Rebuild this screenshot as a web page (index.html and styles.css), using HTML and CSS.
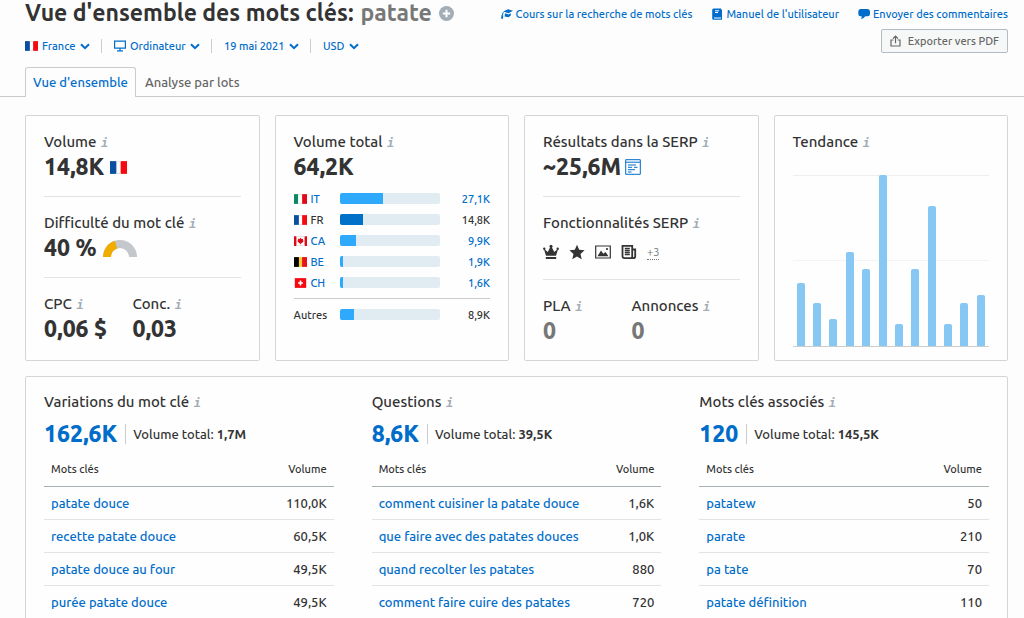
FILE: index.html
```html
<!DOCTYPE html>
<html lang="fr">
<head>
<meta charset="utf-8">
<meta name="viewport" content="width=device-width, initial-scale=1">
<title>Vue d'ensemble des mots clés: patate</title>
<link rel="stylesheet" href="styles.css">
</head>
<body>
<svg class="sprite" aria-hidden="true">
  <symbol id="chevron" viewBox="0 0 10 7"><path d="M1 1.2 5 5.2 9 1.2" fill="none" stroke="currentColor" stroke-width="2"/></symbol>
  <symbol id="flag-fr" viewBox="0 0 16 12"><path fill="#fff" d="M0 0h16v12H0z"/><path fill="#0a4ea2" d="M0 0h6v12H0z"/><path fill="#f50a12" d="M10 0h6v12h-6z"/><path d="M6 .5h4M6 11.5h4" stroke="#ddd"/></symbol>
  <symbol id="flag-it" viewBox="0 0 16 12"><path fill="#fff" d="M0 0h16v12H0z"/><path fill="#0b8a62" d="M0 0h5v12H0z"/><path fill="#e00a17" d="M10 0h6v12h-6z"/><path d="M5 .5h5M5 11.5h5" stroke="#ddd"/></symbol>
  <symbol id="flag-ca" viewBox="0 0 16 12"><path fill="#fff" d="M0 0h16v12H0z"/><path fill="#e00a17" d="M0 0h3v12H0zM13 0h3v12h-3zM8 2l1.200 1.500L11 3.200v2l1 .8-2.500 2.800h-1V10h-1V8.800h-1L4 6l1-.8v-2l1.800.3z"/><path d="M3 .5h10M3 11.5h10" stroke="#ddd"/></symbol>
  <symbol id="flag-be" viewBox="0 0 16 12"><path fill="#f5cf3a" d="M0 0h16v12H0z"/><path d="M0 0h6v12H0z"/><path fill="#e8111b" d="M10 0h6v12h-6z"/></symbol>
  <symbol id="flag-ch" viewBox="0 0 16 12"><path fill="#f50a12" d="M1 0h14v12H1z"/><path fill="#fff" d="M7 3h2v2h2v2H9v2H7V7H5V5h2z"/></symbol>
</svg>

<header class="head">
  <div class="head-row">
    <h1 class="title">Vue d'ensemble des mots clés: <span class="keyword">patate</span>
      <button class="icon-button" type="button" aria-label="Ajouter"><svg class="plus" viewBox="0 0 15 15"><circle cx="7.500" cy="7.500" r="7.500" fill="#a3adb5"/><path d="M7.500 3.800v7.400M3.800 7.500h7.400" stroke="#fff" stroke-width="2"/></svg></button>
    </h1>
    <nav class="help">
      <a class="help-link" href="#"><svg class="help-icon" viewBox="0 0 12 12"><path d="M2.200 3.600 7 1.300 12 2.700 7.500 5.300z" fill="currentColor"/><path d="M4 5.200 3.600 8.500 7.500 9.300 9.800 7.600V5.300L7.500 6.400z" fill="currentColor"/><path d="M2.300 4.200 1.200 7.500" stroke="currentColor"/><path d="M.6 7.300h1.700L2 10.800H0z" fill="currentColor"/></svg>Cours sur la recherche de mots clés</a>
      <a class="help-link" href="#"><svg class="help-icon" viewBox="0 0 12 12"><path d="M2.500.5H10v9H3v1h7V1.500h1v10.300H2.600C1.600 11.800 1.200 11 1.200 10V2Q1.200.5 2.500.5z" fill="currentColor"/><path d="M4 2.800h4M4 4.500h3" stroke="#fff"/></svg>Manuel de l'utilisateur</a>
      <a class="help-link" href="#"><svg class="help-icon" viewBox="0 0 12 12"><path d="M2.500 1h7.200Q12 1 12 3.500v2.300Q12 8.300 9.700 8.300H7.400Q6 10.500 3 11.300 3.800 10 3.700 8.300H2.500Q.3 8.300.3 5.800V3.500Q.3 1 2.500 1z" fill="currentColor"/></svg>Envoyer des commentaires</a>
    </nav>
  </div>
  <div class="head-row">
    <form class="filters">
      <label class="filter"><svg class="flag" aria-hidden="true"><use href="#flag-fr"/></svg><select class="select" aria-label="Pays"><option>France</option></select><svg class="chevron"><use href="#chevron"/></svg></label>
      <label class="filter"><svg class="monitor" viewBox="0 0 12 12"><path d="M.6 1.200h10.800v7H.6zM6 8v2.500M3 10.900h6" fill="none" stroke="currentColor" stroke-width="1.200"/></svg><select class="select" aria-label="Appareil"><option>Ordinateur</option></select><svg class="chevron"><use href="#chevron"/></svg></label>
      <label class="filter"><select class="select" aria-label="Date"><option>19 mai 2021</option></select><svg class="chevron"><use href="#chevron"/></svg></label>
      <label class="filter"><select class="select" aria-label="Devise"><option>USD</option></select><svg class="chevron"><use href="#chevron"/></svg></label>
    </form>
    <button class="export" type="button"><svg class="export-icon" viewBox="0 0 11 12"><path d="M3.300 5H1v6h9V5H7.700M5.500 8.300V1.500M3 3.700 5.500 1.200 8 3.700" fill="none" stroke="currentColor" stroke-width="1.200"/></svg>Exporter vers PDF</button>
  </div>
  <nav class="tabs">
    <a class="tab tab-active" href="#" aria-current="page">Vue d'ensemble</a>
    <a class="tab" href="#">Analyse par lots</a>
  </nav>
</header>

<main class="content">
  <div class="cards">
    <section class="card">
      <div class="block">
        <h2 class="label">Volume <i class="info">i</i></h2>
        <div class="value">14,8K <svg class="flag flag-big"><use href="#flag-fr"/></svg></div>
      </div>
      <div class="block">
        <h2 class="label">Difficulté du mot clé <i class="info">i</i></h2>
        <div class="value">40 % <svg class="gauge" viewBox="0 0 34 17"><path d="M4 17A13 13 0 0 1 30 17" fill="none" stroke="#c4c7cc" stroke-width="8"/><path d="M4 17A13 13 0 0 1 13 4.600" fill="none" stroke="#f0ad00" stroke-width="8"/></svg></div>
      </div>
      <div class="block pair">
        <div class="pair-item"><h2 class="label">CPC <i class="info">i</i></h2><div class="value">0,06 $</div></div>
        <div class="pair-item"><h2 class="label">Conc. <i class="info">i</i></h2><div class="value">0,03</div></div>
      </div>
    </section>

    <section class="card">
      <div class="block">
        <h2 class="label">Volume total <i class="info">i</i></h2>
        <div class="value">64,2K</div>
        <ul class="countries">
          <li class="country"><a class="code" href="#"><svg class="flag"><use href="#flag-it"/></svg>IT</a><span class="track"><span class="fill" style="width:43%"></span></span><a class="amount" href="#">27,1K</a></li>
          <li class="country"><span class="code"><svg class="flag"><use href="#flag-fr"/></svg>FR</span><span class="track"><span class="fill fill-current" style="width:23%"></span></span><span class="amount">14,8K</span></li>
          <li class="country"><a class="code" href="#"><svg class="flag"><use href="#flag-ca"/></svg>CA</a><span class="track"><span class="fill" style="width:16%"></span></span><a class="amount" href="#">9,9K</a></li>
          <li class="country"><a class="code" href="#"><svg class="flag"><use href="#flag-be"/></svg>BE</a><span class="track"><span class="fill" style="width:3%"></span></span><a class="amount" href="#">1,9K</a></li>
          <li class="country"><a class="code" href="#"><svg class="flag"><use href="#flag-ch"/></svg>CH</a><span class="track"><span class="fill" style="width:3%"></span></span><a class="amount" href="#">1,6K</a></li>
          <li class="country others"><span class="code">Autres</span><span class="track"><span class="fill" style="width:14%"></span></span><span class="amount">8,9K</span></li>
        </ul>
      </div>
    </section>

    <section class="card">
      <div class="block">
        <h2 class="label">Résultats dans la SERP <i class="info">i</i></h2>
        <div class="value value-serp">~25,6M <a class="serp-link" href="#" aria-label="Voir la SERP"><svg class="serp-icon" viewBox="0 0 16 16"><path d="M.7.700h14.600v14.600H.7zM.7 3.200h14.600M3 6h8M3 8.300h4M9 8.300h3.500M3 10.700h7M3 13h3.500" fill="none" stroke="currentColor"/></svg></a></div>
      </div>
      <div class="block">
        <h2 class="label">Fonctionnalités SERP <i class="info">i</i></h2>
        <div class="features">
          <svg class="feature" viewBox="0 0 16 16"><path d="M.8 4.800 4.800 8 7.300 3h1.400l2.500 5 4-3.200L13 11.800H3zM2.800 13h10.400v2H2.800z" fill="currentColor"/><circle cx="8" cy="2.300" r="1.500" fill="currentColor"/><circle cx="1.300" cy="4.800" r="1.200" fill="currentColor"/><circle cx="14.700" cy="4.800" r="1.200" fill="currentColor"/></svg>
          <svg class="feature" viewBox="0 0 16 16"><path d="m8 .8 2.200 5 5.400.500-4.100 3.600 1.200 5.300L8 12.400l-4.700 2.800 1.200-5.300L.4 6.300l5.400-.500z" fill="currentColor"/></svg>
          <svg class="feature" viewBox="0 0 16 16"><path d="M.7 2h14.600v12H.7z" fill="none" stroke="currentColor" stroke-width="1.200"/><path d="M2.500 12.200 6 6.500l2.300 3.200L10.500 8l3 4.200z" fill="currentColor"/><circle cx="12" cy="5" r="1.100" fill="currentColor"/></svg>
          <svg class="feature" viewBox="0 0 16 16"><path d="M1.500 1.800h9.700v12.400H3.500q-2 0-2-2zM11.200 5.500h3v6.700q0 2-2 2H10" fill="none" stroke="currentColor" stroke-width="1.800"/><path d="M3.800 4.500h5M3.800 6.500h5M3.800 8.500h5M3.800 10.500h5" stroke="currentColor" stroke-width="1.300"/></svg>
          <a class="more" href="#">+3</a>
        </div>
      </div>
      <div class="block pair">
        <div class="pair-item"><h2 class="label">PLA <i class="info">i</i></h2><div class="value value-muted">0</div></div>
        <div class="pair-item"><h2 class="label">Annonces <i class="info">i</i></h2><div class="value value-muted">0</div></div>
      </div>
    </section>

    <section class="card card-trend">
      <h2 class="label">Tendance <i class="info">i</i></h2>
      <div class="chart">
        <span class="bar" style="height:37%"></span><span class="bar" style="height:25%"></span><span class="bar" style="height:16%"></span><span class="bar" style="height:55%"></span><span class="bar" style="height:45%"></span><span class="bar" style="height:100%"></span><span class="bar" style="height:13%"></span><span class="bar" style="height:45%"></span><span class="bar" style="height:82%"></span><span class="bar" style="height:13%"></span><span class="bar" style="height:25%"></span><span class="bar" style="height:30%"></span>
      </div>
    </section>
  </div>

  <div class="card ideas">
    <section class="idea">
      <h2 class="label">Variations du mot clé <i class="info">i</i></h2>
      <div class="summary"><a class="count" href="#">162,6K</a><span class="total">Volume total: <b>1,7M</b></span></div>
      <table class="table">
        <thead><tr><th>Mots clés</th><th>Volume</th></tr></thead>
        <tbody>
          <tr><td><a href="#">patate douce</a></td><td>110,0K</td></tr>
          <tr><td><a href="#">recette patate douce</a></td><td>60,5K</td></tr>
          <tr><td><a href="#">patate douce au four</a></td><td>49,5K</td></tr>
          <tr><td><a href="#">purée patate douce</a></td><td>49,5K</td></tr>
        </tbody>
      </table>
    </section>
    <section class="idea">
      <h2 class="label">Questions <i class="info">i</i></h2>
      <div class="summary"><a class="count" href="#">8,6K</a><span class="total">Volume total: <b>39,5K</b></span></div>
      <table class="table">
        <thead><tr><th>Mots clés</th><th>Volume</th></tr></thead>
        <tbody>
          <tr><td><a href="#">comment cuisiner la patate douce</a></td><td>1,6K</td></tr>
          <tr><td><a href="#">que faire avec des patates douces</a></td><td>1,0K</td></tr>
          <tr><td><a href="#">quand recolter les patates</a></td><td>880</td></tr>
          <tr><td><a href="#">comment faire cuire des patates</a></td><td>720</td></tr>
        </tbody>
      </table>
    </section>
    <section class="idea">
      <h2 class="label">Mots clés associés <i class="info">i</i></h2>
      <div class="summary"><a class="count" href="#">120</a><span class="total">Volume total: <b>145,5K</b></span></div>
      <table class="table">
        <thead><tr><th>Mots clés</th><th>Volume</th></tr></thead>
        <tbody>
          <tr><td><a href="#">patatew</a></td><td>50</td></tr>
          <tr><td><a href="#">parate</a></td><td>210</td></tr>
          <tr><td><a href="#">pa tate</a></td><td>70</td></tr>
          <tr><td><a href="#">patate définition</a></td><td>110</td></tr>
        </tbody>
      </table>
    </section>
  </div>
</main>
</body>
</html>
```

FILE: styles.css
```css
* { box-sizing: border-box; }

body {
  margin: 0;
  background: #fdfdfd;
  color: #333;
  font: 500 11px/20px Ubuntu, "Noto Sans", sans-serif;
}

a { color: #006dca; text-decoration: none; }
h1, h2, ul { margin: 0; padding: 0; }
svg { flex: none; }

.sprite { position: absolute; width: 0; height: 0; }

/* Header */
.head { border-bottom: 1px solid #c9ccce; }

.head-row {
  display: flex;
  justify-content: space-between;
  padding: 0 16px 0 25px;
}

.title {
  display: flex;
  align-items: center;
  gap: 7px;
  height: 26px;
  font-size: 23px;
  font-weight: 700;
  white-space: nowrap;
}

.keyword { color: #777; }

.icon-button { display: flex; padding: 0; border: 0; background: none; }
.plus { width: 15px; height: 15px; }

.help { display: flex; gap: 19px; padding-top: 2px; }
.help-link { display: flex; align-items: center; gap: 3px; white-space: nowrap; }
.help-icon { width: 12px; height: 12px; }

.filters { display: flex; align-items: center; padding-top: 13px; }

.filter {
  display: flex;
  align-items: center;
  gap: 4px;
  height: 14px;
  color: #006dca;
}

.filter + .filter {
  margin-left: 11px;
  padding-left: 12px;
  border-left: 1px solid #ccc;
}

.select {
  appearance: none;
  padding: 0;
  border: 0;
  background: none;
  color: inherit;
  font: inherit;
}

.flag { width: 13px; height: 10px; }
.chevron { width: 10px; height: 7px; }
.monitor { width: 12px; height: 12px; }

.export {
  display: flex;
  align-items: center;
  gap: 7px;
  height: 24px;
  margin-top: 3px;
  padding: 0 8px;
  border: 1px solid #b3bcc2;
  border-radius: 2px;
  background: #f6f8f8;
  color: #666;
  font: inherit;
}

.export-icon { width: 11px; height: 12px; }

.tabs { display: flex; margin: 14px 0 -1px 25px; }

.tab {
  height: 30px;
  padding: 0 8px;
  border: 1px solid transparent;
  border-bottom: 0;
  color: #666;
  font-size: 13px;
  line-height: 29px;
}

.tab-active {
  padding: 0 7px;
  border-color: #c9ccce;
  border-radius: 3px 3px 0 0;
  background: #fdfdfd;
  color: #006dca;
}

/* Cards */
.content { padding: 18px 16px 0 25px; }

.cards {
  display: grid;
  grid-template-columns: repeat(4, minmax(0, 1fr));
  gap: 15px;
}

.card {
  padding: 0 18px;
  border: 1px solid #d3d6d8;
  border-radius: 2px;
  background: #fefefe;
}

.block { padding: 16px 0 14px; }
.block + .block { border-top: 1px solid #e0e4e6; }

.label {
  font-size: 15px;
  font-weight: 500;
  line-height: 20px;
  white-space: nowrap;
}

.info {
  margin-left: 1px;
  color: #a3adb5;
  font: italic 700 12px/1 "DejaVu Sans Mono", monospace;
}

.value {
  display: flex;
  align-items: center;
  gap: 6px;
  font-size: 23px;
  font-weight: 800;
  line-height: 30px;
}

.value-serp { gap: 4px; }
.value-muted { color: #777; }
.flag-big { width: 17px; height: 13px; }
.gauge { width: 34px; height: 17px; }
.pair { display: flex; }
.pair-item { flex: 0 0 45%; }

.countries { padding-top: 6px; list-style: none; }

.country {
  display: grid;
  grid-template-columns: 46px minmax(0, 100px) 1fr;
  align-items: center;
  height: 21px;
}

.code { display: flex; align-items: center; gap: 4px; }
.amount { text-align: right; }
.track { height: 11px; overflow: hidden; border-radius: 2px; background: #e1ecf2; }
.fill { display: block; height: 100%; background: #2ea9fb; }
.fill-current { background: #0070c8; }
.others { height: 32px; margin-top: 5px; border-top: 1px solid #ccc; }

.serp-link { display: flex; }
.serp-icon { width: 16px; height: 16px; }
.features { display: flex; align-items: center; gap: 10px; height: 32px; padding-top: 6px; }
.feature { width: 16px; height: 16px; }
.more { border-bottom: 1px dotted #777; color: #777; font-weight: 400; line-height: 14px; }

.card-trend { padding-top: 16px; }

.chart {
  display: flex;
  align-items: flex-end;
  justify-content: space-around;
  height: 172px;
  margin-top: 23px;
  border-bottom: 1px solid #ccc;
  background:
    linear-gradient(#eee, #eee) 0 0 / 100% 1px no-repeat,
    linear-gradient(#f3f3f3, #f3f3f3) 0 50% / 100% 1px no-repeat;
}

.bar { width: 8px; border-radius: 2px 2px 0 0; background: #87c7f3; }

/* Keyword ideas */
.ideas {
  display: grid;
  grid-template-columns: repeat(3, minmax(0, 1fr));
  gap: 38px;
  margin-top: 15px;
  padding: 15px 18px;
}

.summary { display: flex; align-items: center; gap: 8px; height: 43px; }
.count { font-size: 23px; font-weight: 800; }
.total { padding-left: 7px; border-left: 1px solid #ccc; font-size: 13px; }

.table { width: 100%; border-collapse: collapse; }
.table th { height: 31px; padding: 0 7px 3px; border-bottom: 1px solid #a9b0b4; font-weight: 500; font-size: 11px; text-align: left; }
.table td { height: 33px; padding: 0 7px; border-bottom: 1px solid #e0e4e6; font-size: 13px; white-space: nowrap; }
.table th:last-child, .table td:last-child { text-align: right; }
```
